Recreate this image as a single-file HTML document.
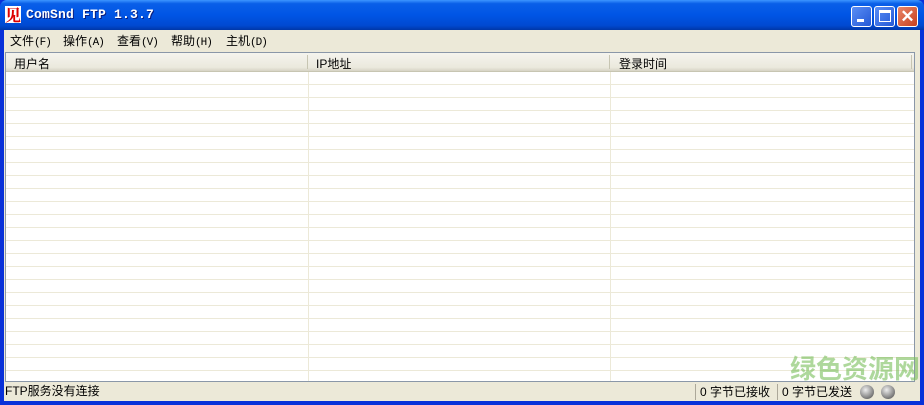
<!DOCTYPE html><html><head><meta charset="utf-8"><style>
*{margin:0;padding:0;box-sizing:border-box}
body{width:924px;height:405px;overflow:hidden;background:#0831d9;font:12px "Liberation Sans","Noto Sans CJK SC",sans-serif;position:relative}
.title{position:absolute;left:0;top:0;width:924px;height:30px;background:linear-gradient(#3d95ff 0,#0a5fe8 12%,#0055e5 50%,#0049d1 85%,#0037a8 100%);border-radius:7px 7px 0 0}
.icon{position:absolute;left:5px;top:6px;width:16px;height:17px;background:#fff;color:#d00;font:bold 16px/17px "Noto Serif CJK SC",serif;text-align:center}
.ttext{position:absolute;left:26px;top:7px;color:#fff;font:bold 13px "Liberation Mono",monospace;letter-spacing:.2px;text-shadow:1px 1px #0a1e80}
.btn{position:absolute;top:6px;width:21px;height:21px;border:1px solid #fff;border-radius:3px;background:linear-gradient(135deg,#5a8ef5,#2459d6)}
.btn.x{background:linear-gradient(135deg,#e9876a,#c8401e)}
.client{position:absolute;left:4px;top:30px;width:916px;height:371px;background:#ece9d8}
.menu span{position:absolute;top:2px;white-space:nowrap}
.menu small{font:11px "Liberation Mono",monospace;letter-spacing:-1px}
.list{position:absolute;left:1px;top:22px;width:910px;height:330px;background:#fff;border:1px solid #8a97a8;overflow:hidden}
.hdr{position:absolute;left:0;top:0;width:908px;height:19px;background:linear-gradient(#f5f4ee,#ebe9dd 80%,#d6d3c4);border-bottom:1px solid #c7c5b2}
.hdr div{position:absolute;top:2px}
.rows{position:absolute;left:0;top:19px;width:908px;height:320px;background:repeating-linear-gradient(#fff 0 12px,#ece9d8 12px 13px)}
.col{position:absolute;top:0;width:1px;height:330px;background:#ece9d8}
.status{position:absolute;left:0;top:352px;width:916px;height:19px;line-height:19px}
.seg{position:absolute;top:2px;height:16px;line-height:16px;border-left:1px solid #aca899}
.ball{position:absolute;top:3px;width:14px;height:14px;border-radius:50%;background:radial-gradient(circle at 40% 35%,#eee,#888 60%,#444)}
.wm{position:absolute;left:790px;top:349px;color:rgba(120,190,90,.6);font:bold 26px "Noto Sans CJK SC",sans-serif}
</style></head><body>
<div class="title"><div class="icon">见</div><div class="ttext">ComSnd FTP 1.3.7</div>
<div class="btn" style="left:851px"><div style="position:absolute;left:5px;top:12px;width:7px;height:3px;background:#fff"></div></div>
<div class="btn" style="left:874px"><div style="position:absolute;left:4px;top:3px;width:12px;height:12px;border:1px solid #fff;border-top-width:3px"></div></div>
<div class="btn x" style="left:897px;color:#fff;font:bold 17px/19px 'Liberation Sans';text-align:center">✕</div></div>
<div class="client">
<div class="menu"><span style="left:6px">文件<small>(F)</small></span><span style="left:59px">操作<small>(A)</small></span><span style="left:113px">查看<small>(V)</small></span><span style="left:167px">帮助<small>(H)</small></span><span style="left:222px">主机<small>(D)</small></span></div>
<div class="list"><div class="rows"></div>
<div class="col" style="left:302px"></div><div class="col" style="left:604px"></div>
<div class="hdr"><div style="left:8px">用户名</div><div style="left:310px">IP地址</div><div style="left:613px">登录时间</div>
<div style="left:301px;top:2px;width:1px;height:14px;background:#c7c5b2"></div><div style="left:603px;top:2px;width:1px;height:14px;background:#c7c5b2"></div><div style="left:905px;top:2px;width:1px;height:14px;background:#c7c5b2"></div></div>
</div>
<div class="status"><span style="margin-left:1px">FTP服务没有连接</span>
<div class="seg" style="left:691px;padding-left:4px;width:82px">0 字节已接收</div>
<div class="seg" style="left:773px;padding-left:4px;width:82px">0 字节已发送</div>
<div class="ball" style="left:856px"></div><div class="ball" style="left:877px"></div></div>
</div>
<div class="wm">绿色资源网</div>
</body></html>
